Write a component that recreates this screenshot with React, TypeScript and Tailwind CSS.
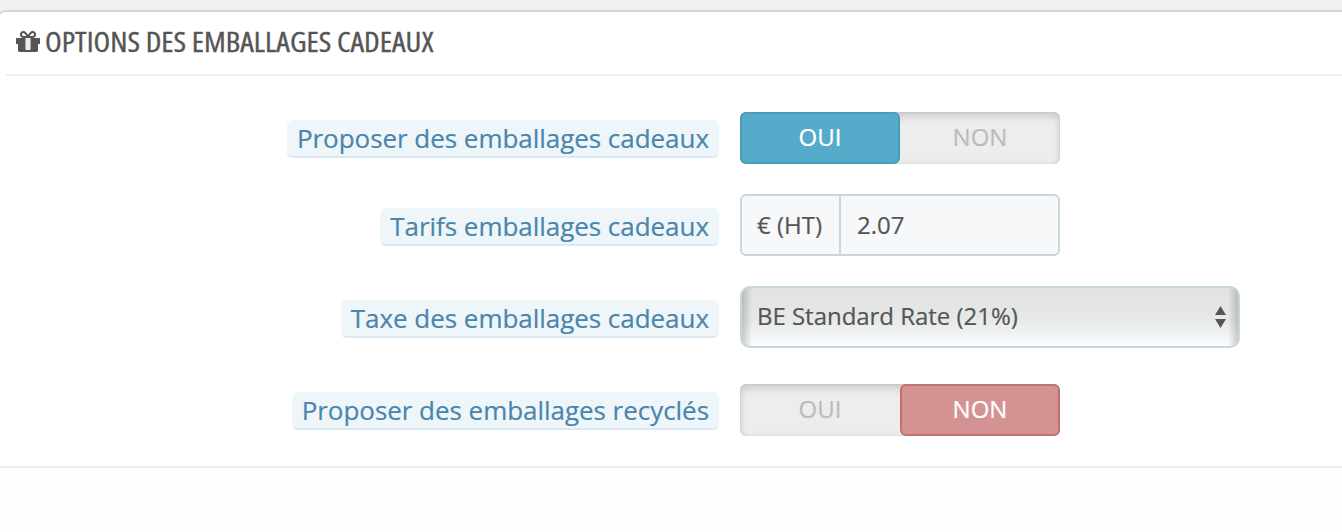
import { useState } from "react";
import type { ReactNode } from "react";
import clsx from "clsx";

function GiftIcon() {
  return (
    <svg viewBox="0 0 1536 1536" className="size-6 shrink-0" fill="currentColor">
      <path d="M928 1356v-56-468-192h-320v192 468 56q0 25 18 38.500t46 13.500h192q28 0 46-13.500t18-38.500zM472 512h195l-126-161q-26-31-69-31-40 0-68 28t-28 68 28 68 68 28zM1160 416q0-40-28-68t-68-28q-43 0-69 31l-125 161h194q40 0 68-28t28-68zM1536 672v320q0 14-9 23t-23 9h-96v416q0 40-28 68t-68 28h-1088q-40 0-68-28t-28-68v-416h-96q-14 0-23-9t-9-23v-320q0-14 9-23t23-9h440q-93 0-158.500-65.500t-65.500-158.500 65.500-158.500 158.500-65.500q107 0 168 77l128 165 128-165q61-77 168-77 93 0 158.500 65.500t65.500 158.500-65.500 158.500-158.500 65.500h440q14 0 23 9t9 23z" />
      <path d="M640 640h256v768h-256z" fill="#ececec" />
    </svg>
  );
}

interface RowProps {
  label: string;
  tall?: boolean;
  children: ReactNode;
}

function Row({ label, tall, children }: RowProps) {
  return (
    <div className="flex items-start gap-[21px]">
      <div className={clsx("flex w-[717px] justify-end", tall ? "pt-3.5" : "pt-2")}>
        <span className="h-[38px] rounded-md border-b-2 border-[#d8e8f4] bg-[#eff6fa] px-2.5 text-[26px] leading-9 tracking-[-0.04px] whitespace-nowrap text-[#4a85ac] [-webkit-text-stroke:0.2px]">
          {label}
        </span>
      </div>
      {children}
    </div>
  );
}

function Switch({ initial }: { initial: boolean }) {
  const [on, setOn] = useState(initial);
  const base = "h-full w-40 rounded-md border-2 pb-0.5 text-center text-[24px] leading-[44px] [-webkit-text-stroke:0.2px]";

  return (
    <div className="flex h-[52px] w-80 rounded-md bg-[#ededed] shadow-[inset_0_4px_10px_rgba(0,0,0,0.16),inset_0_0_2px_rgba(0,0,0,0.12)]">
      <button
        onClick={() => setOn(true)}
        className={clsx(base, on ? "border-[#4a9aba] bg-[#56abcb] text-white" : "border-transparent text-[#bbbbbb]")}
      >
        OUI
      </button>
      <button
        onClick={() => setOn(false)}
        className={clsx(base, on ? "border-transparent text-[#bbbbbb]" : "border-[#c0706f] bg-[#d59293] text-white")}
      >
        NON
      </button>
    </div>
  );
}

export default function App() {
  return (
    <div className="h-[532px] overflow-hidden bg-[#eff0f2] pt-2.5 font-['Open_Sans','Noto_Sans',sans-serif] text-[#555555]">
      <div className="-mr-3 -ml-1 h-[540px] overflow-hidden rounded-[10px] border-2 border-[#d3d8db] bg-white">
        <div className="ml-2 flex h-16 items-start gap-[5px] border-b-2 border-[#eeeeee] pt-4 pl-2.5">
          <GiftIcon />
          <h3 className="origin-left scale-x-[1.094] text-[28px] leading-[26px] whitespace-nowrap [font-stretch:75%] [-webkit-text-stroke:0.35px]">
            OPTIONS DES EMBALLAGES CADEAUX
          </h3>
        </div>

        <div className="flex h-[390px] flex-col pt-9 pl-1">
          <Row label="Proposer des emballages cadeaux">
            <Switch initial={true} />
          </Row>
          <div className="mt-[30px]">
            <Row label="Tarifs emballages cadeaux" tall>
              <div className="flex h-[62px] w-80 rounded-md border-2 border-[#c7d6db] bg-[#f6f8fa] text-[24px] leading-[58px] [-webkit-text-stroke:0.2px]">
                <span className="w-[99px] border-r-2 border-[#c7d6db] pl-[15px] whitespace-nowrap">€ (HT)</span>
                <span className="pl-4">2.07</span>
              </div>
            </Row>
          </div>
          <div className="mt-[30px]">
            <Row label="Taxe des emballages cadeaux" tall>
              <div className="flex h-[62px] w-[500px] items-center justify-between rounded-[10px] border-2 border-[#c7d6db] bg-[linear-gradient(to_right,rgba(0,0,0,0.18),transparent_10px,transparent_calc(100%-10px),rgba(0,0,0,0.18)),linear-gradient(to_bottom,#e1e3e2,#e6e8e7_50%,#f8fbfc)] pr-3 pl-[15px] text-[24px] leading-[56px] [-webkit-text-stroke:0.2px]">
                <span className="pb-0.5 tracking-[-0.03px]">BE Standard Rate (21%)</span>
                <svg viewBox="0 0 11 22" className="h-[22px] w-[11px]" fill="#555555">
                  <path d="M5.500 0L11 9H0zM0 13h11l-5.500 9z" />
                </svg>
              </div>
            </Row>
          </div>
          <div className="mt-9">
            <Row label="Proposer des emballages recyclés">
              <Switch initial={false} />
            </Row>
          </div>
        </div>

        <div className="h-20 border-t-2 border-[#ebedf0] bg-[#fcfdfe]" />
      </div>
    </div>
  );
}
